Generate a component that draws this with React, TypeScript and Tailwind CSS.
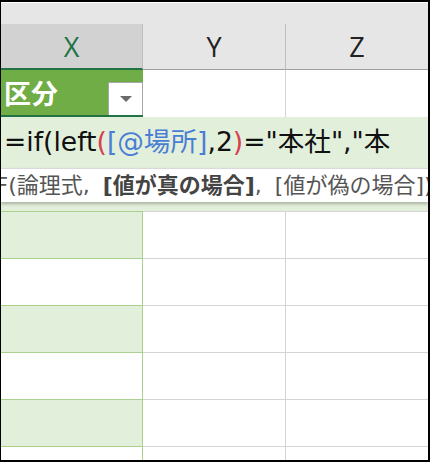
const jp = "font-['Noto_Sans_CJK_JP',sans-serif]";
const mixed = "font-['DejaVu_Sans','Noto_Sans_CJK_JP',sans-serif]";

function DataRow({ band }: { band: boolean }) {
  return (
    <div className="flex h-[47px] shrink-0">
      <div
        className={`w-[142px] shrink-0 border-t border-r border-[#a9d08e] ${band ? "bg-[#e2efda]" : "bg-white"}`}
      />
      <div className="w-[143px] shrink-0 border-t border-r border-[#d4d4d4] bg-white" />
      <div className="flex-1 border-t border-[#d4d4d4] bg-white" />
    </div>
  );
}

export default function App() {
  const bands = [true, false, true, false, true, false];
  return (
    <div className={`w-[430px] h-[462px] overflow-hidden flex flex-col bg-white border-t-2 border-l border-r-2 border-b-2 border-black ${jp}`}>
      <div className="h-px shrink-0 bg-white" />
      <div className="h-[21px] shrink-0 bg-[#e6e6e6]" />

      {/* column headers */}
      <div className="flex h-[46px] shrink-0 bg-[#e6e6e6] font-['Open_Sans',sans-serif] text-[27px] leading-none">
        <div className="w-[142px] shrink-0 flex items-center justify-center bg-[#d2d2d2] text-[#217346] border-r border-r-[#bdbdbd] border-b-2 border-b-[#217346]">
          X
        </div>
        <div className="w-[143px] shrink-0 flex items-center justify-center text-[#222] border-r border-r-[#bdbdbd] border-b border-b-[#9e9e9e]">
          Y
        </div>
        <div className="flex-1 flex items-center justify-center text-[#222] border-b border-b-[#9e9e9e]">
          Z
        </div>
      </div>

      {/* table header row */}
      <div className="flex h-[47px] shrink-0">
        <div className="w-[142px] shrink-0 flex justify-between bg-[#70ad47] border-b-2 border-[#217346] pl-[3px]">
          <span className="self-center text-[27px] font-bold text-white leading-none">区分</span>
          <div className="self-end w-[35px] h-[33px] bg-white border border-b-0 border-[#a6a6a6] flex items-center justify-center">
            <div className="w-0 h-0 border-l-[6px] border-r-[6px] border-t-[6px] border-l-transparent border-r-transparent border-t-[#6b6b6b]" />
          </div>
        </div>
        <div className="w-[143px] shrink-0 bg-white border-r border-[#d4d4d4]" />
        <div className="flex-1 bg-white" />
      </div>

      {/* cell in edit mode with function tooltip */}
      <div className="flex flex-col h-[94px] shrink-0 bg-[#e2efda]">
        <div className={`h-[51px] shrink-0 flex items-center pl-[3px] text-[26.6px] text-[#111] whitespace-nowrap overflow-hidden leading-none ${mixed}`}>
          <span>=if(left</span>
          <span className="text-[#d6404f]">(</span>
          <span className="text-[#4a7ed6]">[@場所]</span>
          <span>,2</span>
          <span className="text-[#d6404f]">)</span>
          <span>="本社","本</span>
        </div>
        <div className={`h-[34px] shrink-0 flex items-center bg-white border-t border-[#d9d9d9] shadow-[0_2px_3px_rgba(0,0,0,0.25)] text-[22px] text-[#555] whitespace-nowrap overflow-hidden leading-none [word-spacing:6px] ${mixed}`}>
          <span className="-ml-[12px]">
            IF(論理式, <b className="text-[#444]">[値が真の場合]</b>, [値が偽の場合])
          </span>
        </div>
      </div>

      {bands.map((b, i) => (
        <DataRow key={i} band={b} />
      ))}
    </div>
  );
}
